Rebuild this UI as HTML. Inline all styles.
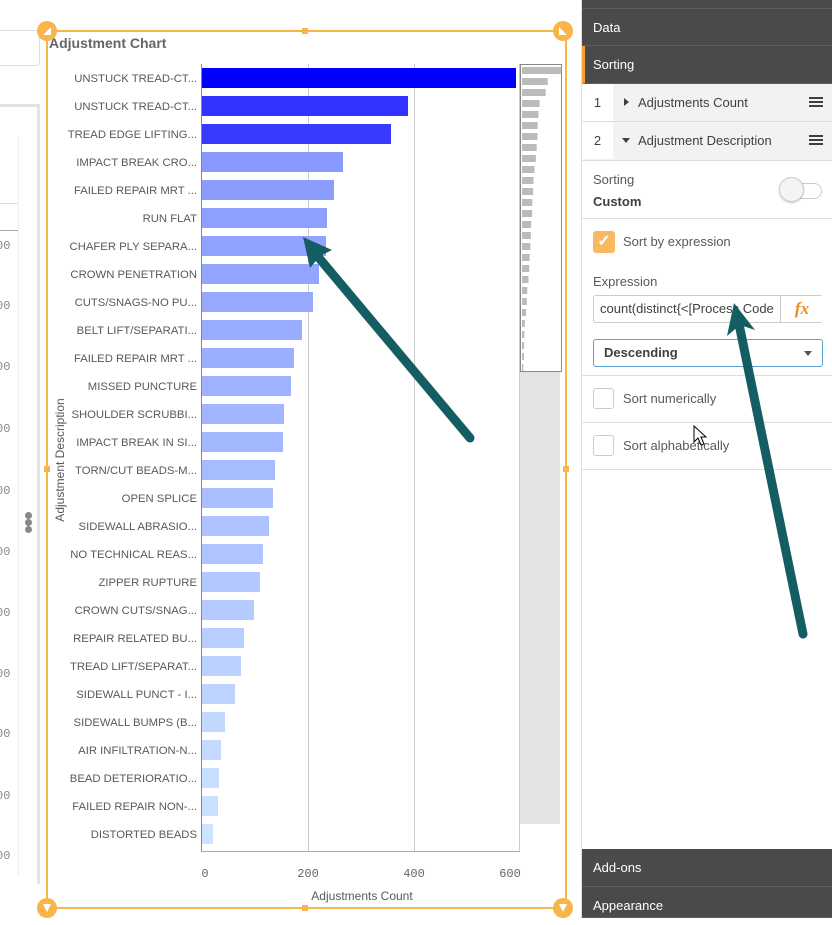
<!DOCTYPE html>
<html><head><meta charset="utf-8"><style>
html,body{margin:0;padding:0;width:832px;height:918px;overflow:hidden;background:#fff;font-family:"Liberation Sans",sans-serif;}
.abs{position:absolute}
.panel{position:absolute;left:581px;top:0;width:251px;height:918px;background:#fff;border-left:1px solid #ddd;}
.hdr{position:absolute;left:0;width:251px;background:#4a4a4a;color:#fff;font-size:13px;box-sizing:border-box;padding-left:11px;border-bottom:1px solid #5e5e5e}
.row{position:absolute;left:0;width:251px;height:37px;background:#f2f2f2;border-bottom:1px solid #ddd;font-size:13px;color:#404040}
.num{position:absolute;left:0;top:0;width:31px;height:37px;background:#fff;text-align:center;line-height:37px}
.lbl{position:absolute;left:56px;line-height:37px}
.ham{position:absolute;right:10px;top:13px;width:14px;height:2px;background:#404040;box-shadow:0 4px 0 #404040,0 8px 0 #404040}
.sep{position:absolute;left:0;width:251px;height:1px;background:#ddd}
.cb{position:absolute;left:11px;width:21px;height:21px;border:1px solid #ccc;border-radius:3px;background:#fff;box-sizing:border-box}
.t13{position:absolute;font-size:13px;color:#595959}
</style></head><body>
<div class="abs" style="left:0;top:30px;width:40px;height:36px;border:1px solid #ddd;border-left:none;border-radius:0 0 4px 0;box-sizing:border-box"></div>
<div class="abs" style="left:0;top:104px;width:40px;height:780px;border-right:3px solid #e4e4e4;border-top:3px solid #e4e4e4;box-sizing:border-box"></div>
<div class="abs" style="left:18px;top:136px;width:1px;height:740px;background:#eee"></div>
<div class="abs" style="left:0;top:203px;width:18px;height:1px;background:#ddd"></div>
<div class="abs" style="left:0;top:230px;width:18px;height:1px;background:#aaa"></div>
<div style="position:absolute;left:0;top:0;font-family:'Liberation Mono',monospace;font-size:12px;color:#888">
<div class="abs" style="top:239px;left:-4px">00</div><div class="abs" style="top:299px;left:-4px">00</div><div class="abs" style="top:360px;left:-4px">00</div><div class="abs" style="top:422px;left:-4px">00</div><div class="abs" style="top:484px;left:-4px">00</div><div class="abs" style="top:545px;left:-4px">00</div><div class="abs" style="top:606px;left:-4px">00</div><div class="abs" style="top:667px;left:-4px">00</div><div class="abs" style="top:727px;left:-4px">00</div><div class="abs" style="top:789px;left:-4px">00</div><div class="abs" style="top:849px;left:-4px">00</div>
</div>
<div class="abs" style="left:25px;top:512px;width:7px;height:7px;border-radius:50%;background:#888;box-shadow:0 7px 0 #888,0 14px 0 #888"></div>

<svg class="abs" style="left:0;top:0" width="832" height="918" xmlns="http://www.w3.org/2000/svg" font-family="Liberation Sans, sans-serif">
<rect x="47" y="31" width="519" height="877" fill="#fff"/>
<rect x="520" y="372" width="40" height="452" fill="#e3e3e3"/>
<line x1="308.5" y1="64" x2="308.5" y2="852" stroke="#ccc"/>
<line x1="414.5" y1="64" x2="414.5" y2="852" stroke="#ccc"/>
<line x1="519.5" y1="64" x2="519.5" y2="852" stroke="#ccc"/>
<line x1="201.5" y1="64" x2="201.5" y2="852" stroke="#888"/>
<line x1="201" y1="851.5" x2="520" y2="851.5" stroke="#aaa"/>
<g id="bars"></g>
<rect x="520.5" y="64.5" width="41" height="307" fill="none" stroke="#888"/>
<g id="mini"></g>
<text x="49" y="48" font-size="14" font-weight="bold" fill="#666">Adjustment Chart</text>
<g font-size="11.3" fill="#595959" text-anchor="end" id="labels"></g>
<g font-family="Liberation Mono, monospace" font-size="12" fill="#666" text-anchor="middle">
<text x="205" y="877">0</text><text x="308" y="877">200</text><text x="414" y="877">400</text><text x="510" y="877">600</text></g>
<text x="362" y="900" font-size="12" fill="#595959" text-anchor="middle">Adjustments Count</text>
<text transform="translate(64,460) rotate(-90)" font-size="12" fill="#595959" text-anchor="middle">Adjustment Description</text>
<rect x="47" y="31" width="519" height="877" fill="none" stroke="#f8b54a" stroke-width="2"/>
<g fill="#f8b54a">
<rect x="302" y="28" width="6" height="6"/><rect x="302" y="905" width="6" height="6"/><rect x="44" y="466" width="6" height="6"/><rect x="563" y="466" width="6" height="6"/>
<circle cx="47" cy="31" r="10"/><circle cx="563" cy="31" r="10"/><circle cx="47" cy="908" r="10"/><circle cx="563" cy="908" r="10"/></g>
<g fill="#fff"><path d="M43 35 L51 27 L51 35Z"/><path d="M559 27 L567 35 L559 35Z"/><path d="M43 904 L51 904 L47 912Z"/><path d="M559 904 L567 904 L563 912Z"/></g>
<g stroke="#145e63" stroke-width="9" stroke-linecap="round" fill="none">
<line x1="470" y1="438" x2="314" y2="252"/></g>
<g fill="#145e63">
<polygon points="303,237 332,250 320,256 310,268"/></g>
</svg>

<div class="panel">
<div class="hdr" style="top:0;height:9px"></div>
<div class="hdr" style="top:9px;height:37px;line-height:37px">Data</div>
<div class="hdr" style="top:46px;height:38px;line-height:38px;border-left:3px solid #f8a030;padding-left:8px">Sorting</div>
<div class="row" style="top:84px"><div class="num">1</div><div class="abs" style="left:42px;top:14px;border-left:5px solid #404040;border-top:4px solid transparent;border-bottom:4px solid transparent"></div><div class="lbl">Adjustments Count</div><div class="ham"></div></div>
<div class="row" style="top:122px;height:38px"><div class="num">2</div><div class="abs" style="left:40px;top:16px;border-top:5px solid #404040;border-left:4px solid transparent;border-right:4px solid transparent"></div><div class="lbl">Adjustment Description</div><div class="ham"></div></div>
<div class="t13" style="left:11px;top:172px">Sorting</div>
<div class="t13" style="left:11px;top:194px;font-weight:bold;color:#404040">Custom</div>
<div class="abs" style="left:198px;top:183px;width:42px;height:16px;border:1px solid #ccc;border-radius:9px;box-sizing:border-box"></div>
<div class="abs" style="left:197px;top:177px;width:25px;height:25px;border-radius:50%;background:#f4f4f4;border:1px solid #ccc;box-sizing:border-box;box-shadow:0 1px 2px rgba(0,0,0,.2)"></div>
<div class="sep" style="top:218px"></div>
<div class="abs" style="left:11px;top:231px;width:22px;height:22px;border-radius:3px;background:#f8b960;color:#fff;font-size:16px;text-align:center;line-height:22px;font-weight:bold">✓</div>
<div class="t13" style="left:41px;top:234px">Sort by expression</div>
<div class="t13" style="left:11px;top:274px">Expression</div>
<div class="abs" style="left:11px;top:295px;width:230px;height:28px;border:1px solid #ccc;border-radius:3px;box-sizing:border-box;font-size:13px;color:#404040;line-height:26px;padding-left:6px;overflow:hidden;white-space:nowrap">count(distinct{&lt;[Process Code</div>
<div class="abs" style="left:198px;top:296px;width:42px;height:26px;border-left:1px solid #ccc;background:#fff;color:#f08a1c;font-family:'Liberation Serif',serif;font-style:italic;font-weight:bold;font-size:17px;text-align:center;line-height:26px">fx</div>
<div class="abs" style="left:11px;top:339px;width:230px;height:28px;border:1px solid #5aa3d0;border-radius:3px;box-sizing:border-box;font-size:13px;font-weight:bold;color:#404040;line-height:26px;padding-left:10px">Descending</div>
<div class="abs" style="left:222px;top:351px;border-top:5px solid #555;border-left:4px solid transparent;border-right:4px solid transparent"></div>
<div class="sep" style="top:375px"></div>
<div class="cb" style="top:388px"></div><div class="t13" style="left:41px;top:391px">Sort numerically</div>
<div class="sep" style="top:422px"></div>
<div class="cb" style="top:435px"></div><div class="t13" style="left:41px;top:438px">Sort alphabetically</div>
<div class="sep" style="top:469px"></div>
<div class="hdr" style="top:849px;height:38px;line-height:38px">Add-ons</div>
<div class="hdr" style="top:887px;height:31px;line-height:38px">Appearance</div>
</div>
<svg class="abs" style="left:693px;top:425px" width="14" height="22"><path d="M1 1 L1 17 L5 13 L8 20 L11 19 L8 12 L13 12 Z" fill="#fff" stroke="#000"/></svg>
<svg class="abs" style="left:0;top:0;pointer-events:none" width="832" height="918">
<line x1="803" y1="634" x2="739" y2="324" stroke="#145e63" stroke-width="9" stroke-linecap="round"/>
<polygon points="734,303 755,330 740,325 727,336" fill="#145e63"/>
</svg>
<script>
var labels=["UNSTUCK TREAD-CT...","UNSTUCK TREAD-CT...","TREAD EDGE LIFTING...","IMPACT BREAK CRO...","FAILED REPAIR MRT ...","RUN FLAT","CHAFER PLY SEPARA...","CROWN PENETRATION","CUTS/SNAGS-NO PU...","BELT LIFT/SEPARATI...","FAILED REPAIR MRT ...","MISSED PUNCTURE","SHOULDER SCRUBBI...","IMPACT BREAK IN SI...","TORN/CUT BEADS-M...","OPEN SPLICE","SIDEWALL ABRASIO...","NO TECHNICAL REAS...","ZIPPER RUPTURE","CROWN CUTS/SNAG...","REPAIR RELATED BU...","TREAD LIFT/SEPARAT...","SIDEWALL PUNCT - I...","SIDEWALL BUMPS (B...","AIR INFILTRATION-N...","BEAD DETERIORATIO...","FAILED REPAIR NON-...","DISTORTED BEADS"];
var ends=[516,408,391,343,334,327,326,319,313,302,294,291,284,283,275,273,269,263,260,254,244,241,235,225,221,219,218,213];
var cols=["#0000ff","#3333ff","#3a3aff"];
var ns="http://www.w3.org/2000/svg",b=document.getElementById("bars"),l=document.getElementById("labels"),m=document.getElementById("mini");
for(var i=0;i<28;i++){var y=78+i*28;var c;
if(i<3)c=cols[i];else{var t=(i-3)/24;var r=Math.round(136+(204-136)*t),g=Math.round(153+(228-153)*t);c="rgb("+r+","+g+",255)";}
var e=document.createElementNS(ns,"rect");e.setAttribute("x",202);e.setAttribute("y",y-10);e.setAttribute("width",ends[i]-202);e.setAttribute("height",20);e.setAttribute("fill",c);b.appendChild(e);
var tx=document.createElementNS(ns,"text");tx.setAttribute("x",197);tx.setAttribute("y",y+4);tx.textContent=labels[i];l.appendChild(tx);
var mr=document.createElementNS(ns,"rect");mr.setAttribute("x",522);mr.setAttribute("y",67+i*11);mr.setAttribute("width",Math.max(1,(ends[i]-202)*0.125));mr.setAttribute("height",7);mr.setAttribute("fill","#bbb");m.appendChild(mr);}
</script>
</body></html>
